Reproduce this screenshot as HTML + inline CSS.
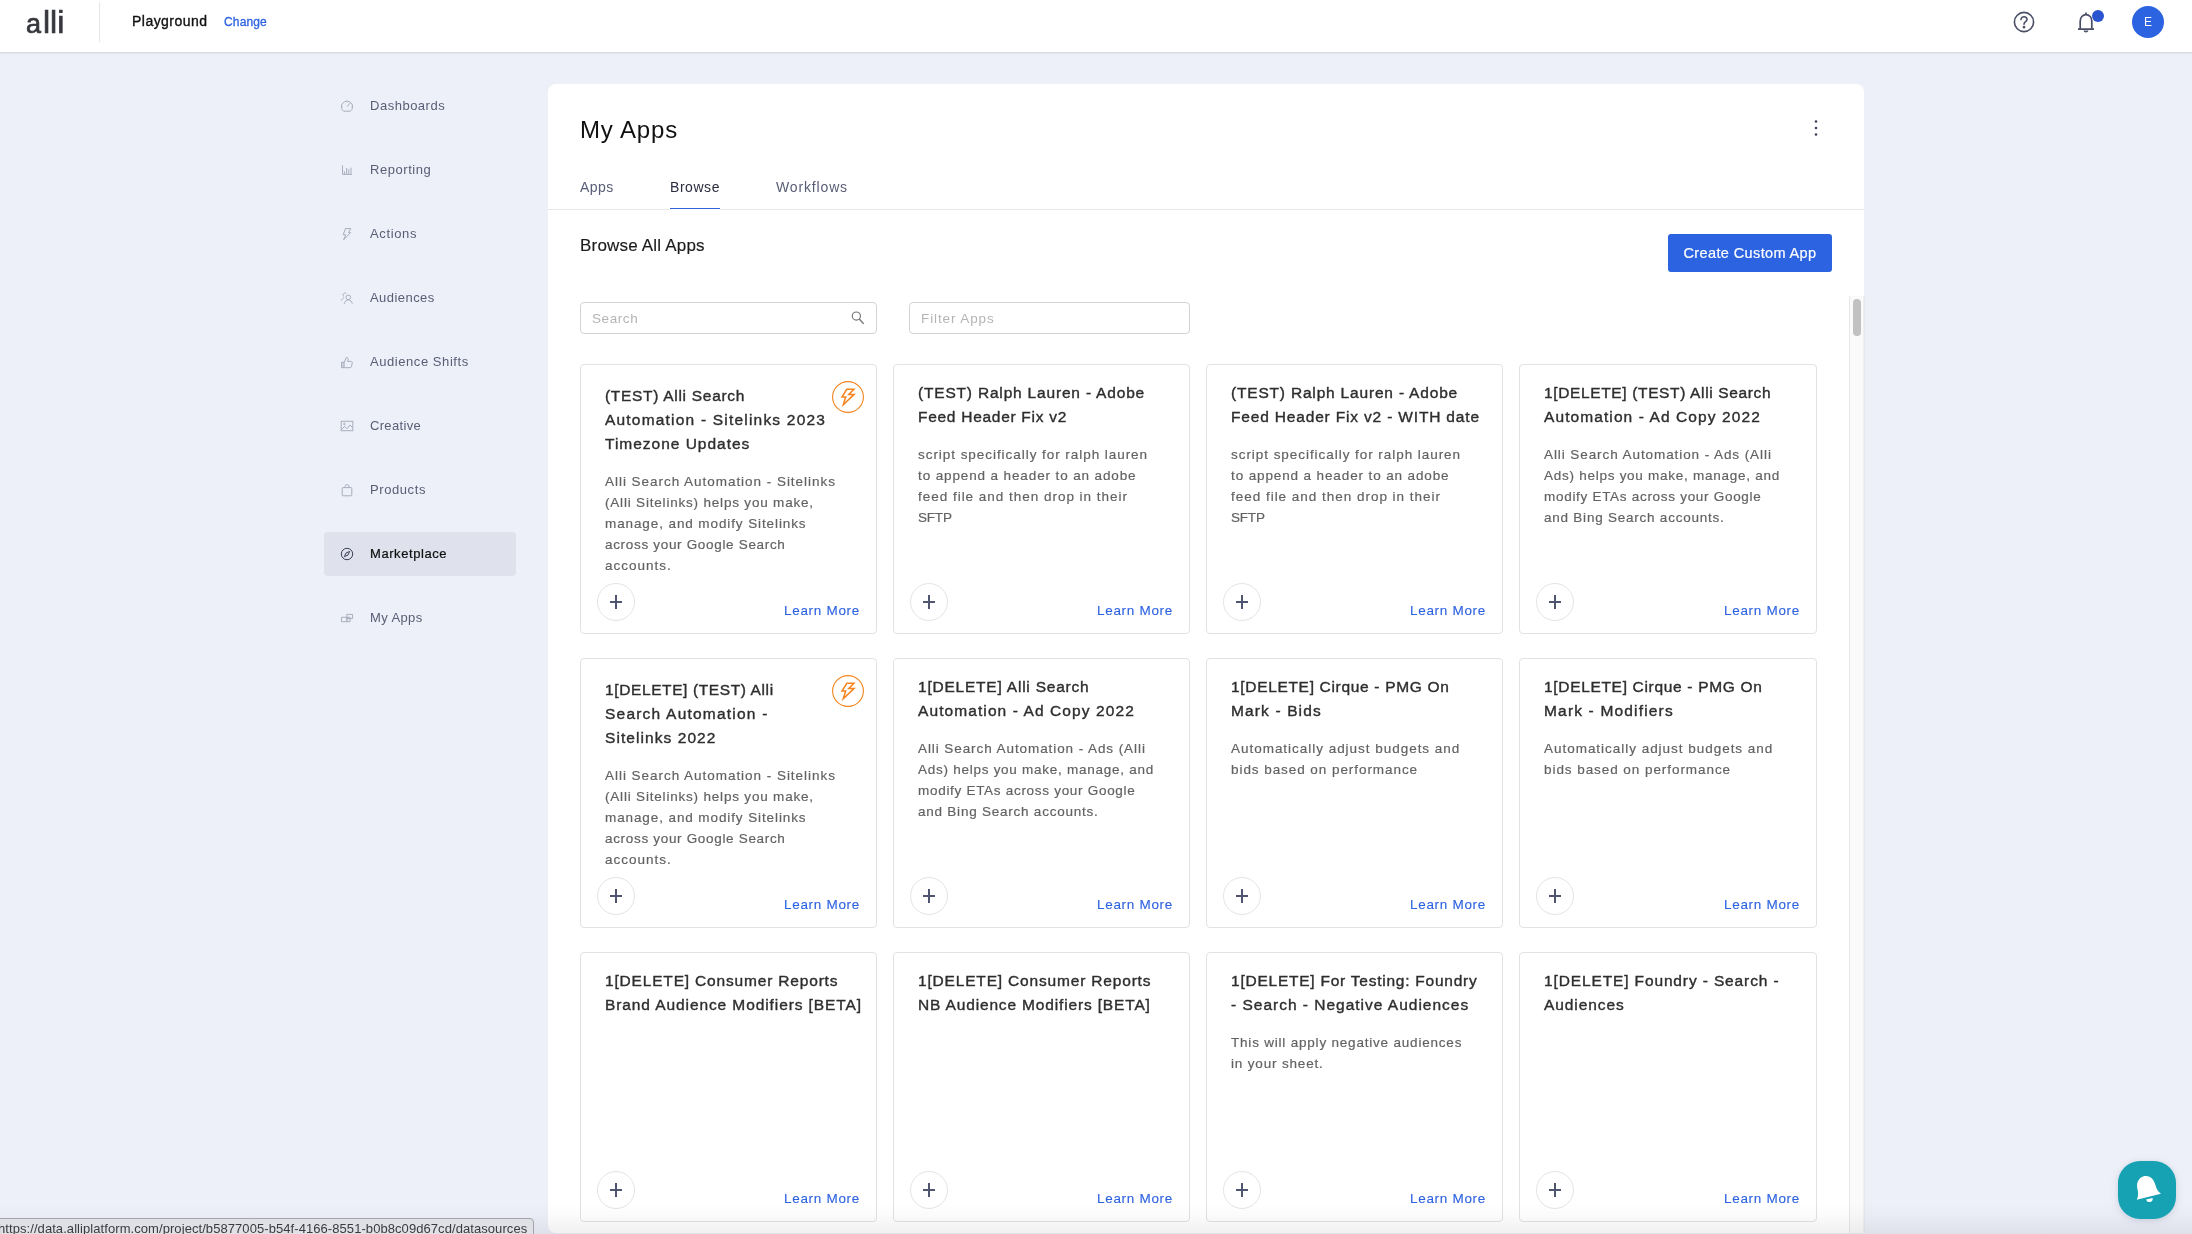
<!DOCTYPE html>
<html lang="en">
<head>
<meta charset="utf-8">
<title>My Apps - Browse</title>
<style>
*{box-sizing:border-box;margin:0;padding:0}
html,body{width:2192px;height:1234px;overflow:hidden}
body{background:#edf0f8;font-family:"Liberation Sans",Arial,sans-serif;color:#1b1b1b;position:relative}
.abs{position:absolute}
#hdr,#panel,.nav,#status,#chat{will-change:transform}
/* header */
#hdr{position:absolute;left:0;top:0;width:2192px;height:52px;background:#fff;box-shadow:0 1px 0 #d9dce4,0 2px 1px rgba(217,220,228,.35)}
#logo{position:absolute;left:26px;top:2px;font-size:32px;line-height:40px;color:#36373d;letter-spacing:0;-webkit-text-stroke:.7px #36373d}
#hdiv{position:absolute;left:99px;top:2px;width:1px;height:40px;background:#e6e6e7}
#proj{position:absolute;left:132px;top:11px;font-size:14px;line-height:20px;color:#111;letter-spacing:.47px;-webkit-text-stroke:.35px #111}
#chg{position:absolute;left:224px;top:12px;font-size:12px;line-height:20px;color:#2d62e0;letter-spacing:.15px;-webkit-text-stroke:.3px #2d62e0}
#avatar{position:absolute;left:2132px;top:6px;width:32px;height:32px;border-radius:50%;background:#2b63e1;color:#fff;font-size:12px;line-height:33px;text-align:center}
#ndot{position:absolute;left:2092px;top:10px;width:12px;height:12px;border-radius:50%;background:#2b55cf}
/* sidebar */
.nav{position:absolute;left:324px;width:192px;height:44px;border-radius:4px;font-size:13px;line-height:44px;color:#595d75;padding-left:46px;letter-spacing:.35px}
.nav.on{background:#dfe2ec;color:#111;-webkit-text-stroke:.22px #111}
.nav svg{position:absolute;left:16px;top:15px;width:14px;height:14px;fill:none;stroke:#a9adbd;stroke-width:1}
.nav.on svg{stroke:#3c4058}
/* panel */
#panel{position:absolute;left:548px;top:84px;width:1316px;height:1149px;background:#fff;border-radius:8px 8px 0 8px;overflow:hidden}
#title{position:absolute;left:32px;top:30px;font-size:24px;line-height:32px;color:#111;letter-spacing:.85px}
.tab{position:absolute;top:92.5px;font-size:14px;line-height:20px;color:#595d75;letter-spacing:.45px}
.tab.on{color:#2a2d3e}
#tabline{position:absolute;left:0;top:125px;width:1316px;height:1px;background:#e7e7e8}
#tabul{position:absolute;left:122px;top:124px;width:50px;height:2px;background:#fff;border-top:1px solid #2d62e0}
#sub{position:absolute;left:32px;top:150px;font-size:17px;line-height:24px;color:#1b1b1b;letter-spacing:.19px;-webkit-text-stroke:.15px #1b1b1b}
#cbtn{position:absolute;left:1120px;top:150px;width:164px;height:38px;border-radius:3px;background:#2b63e1;color:#fff;font-size:14.5px;line-height:39px;text-align:center;letter-spacing:.38px;-webkit-text-stroke:.2px #fff}
.inp{position:absolute;top:218px;height:32px;border:1px solid #d3d3d4;border-radius:4px;background:#fff;font-size:13.5px;line-height:31px;color:#b4b4b6;padding-left:11px;letter-spacing:.5px}
#track{position:absolute;left:1301px;top:212px;width:15px;height:940px;background:#fafafa;border-left:1px solid #e8e8e8;border-right:1px solid #f0f0f0}
#thumb{position:absolute;left:1305px;top:215px;width:8px;height:37px;border-radius:4px;background:#c1c1c1}
/* cards */
.card{position:absolute;width:297px;height:270px;border:1px solid #e2e2e4;border-radius:4px;background:#fff}
.t{position:absolute;left:24px;white-space:nowrap;font-size:15.5px;line-height:24px;color:#2e2e2e;-webkit-text-stroke:.38px #2e2e2e}
.d{position:absolute;left:24px;white-space:nowrap;font-size:13.5px;line-height:21px;color:#626262;-webkit-text-stroke:.18px #626262}
.plus{position:absolute;left:16px;top:218px;width:38px;height:38px;border:1px solid #e4e4e9;border-radius:50%;background:#fff}
.plus:before{content:"";position:absolute;left:11.7px;top:17px;width:12.6px;height:2px;background:#50556f}
.plus:after{content:"";position:absolute;left:17px;top:11.2px;width:2px;height:13.6px;background:#50556f}
.lm{position:absolute;right:16px;top:235px;white-space:nowrap;font-size:13.5px;line-height:21px;color:#2d62e0;-webkit-text-stroke:.1px #2d62e0}
.bolt{position:absolute;left:251px;top:16px;width:32px;height:32px}
#status{position:absolute;left:-1px;top:1218px;width:535px;height:20px;background:#dfe1e6;border:1px solid #a3a5a9;border-radius:0 4px 0 0;font-size:13px;line-height:15px;padding-top:1.6px;color:#3b3b3d;white-space:nowrap;overflow:hidden;text-indent:-2px;letter-spacing:.07px}
#chat{position:absolute;left:2118px;top:1161px;width:58px;height:58px;border-radius:22px;background:#17a2b3;box-shadow:0 1px 5px rgba(60,70,110,.13),0 2px 12px rgba(60,70,110,.07)}
#fade{position:absolute;left:0;top:1204px;width:2192px;height:30px;background:linear-gradient(to bottom,rgba(30,30,50,0),rgba(30,30,50,.02) 40%,rgba(30,30,50,.065));pointer-events:none}
</style>
</head>
<body>
<div id="hdr">
  <div id="logo"><span style="font-size:27px;letter-spacing:1.9px">a</span>lli</div>
  <div id="hdiv"></div>
  <div id="proj">Playground</div>
  <div id="chg">Change</div>
  <svg class="abs" style="left:2012px;top:10px" width="24" height="24" viewBox="0 0 24 24" fill="none" stroke="#4a4f66" stroke-width="1.6"><circle cx="12" cy="12" r="9.6"/><path d="M9 9.6c0-1.7 1.3-2.9 3-2.9s3 1.1 3 2.7c0 2.2-3 2.4-3 4.8" stroke-linecap="round"/><circle cx="12" cy="17.2" r=".6" fill="#4a4f66"/></svg>
  <svg class="abs" style="left:2074px;top:10px" width="24" height="24" viewBox="0 0 24 24" fill="none" stroke="#4a4f66" stroke-width="1.7"><path d="M6.2 19V11c0-3.6 2.5-6.3 5.8-6.3s5.8 2.7 5.8 6.3v8M4 19.2h16" stroke-linejoin="round"/><path d="M10.3 20.5a1.8 1.8 0 0 0 3.4 0M12 2.6v2"/></svg>
  <div id="ndot"></div>
  <div id="avatar">E</div>
</div>

<div class="nav" style="top:84px;letter-spacing:0.510px"><svg viewBox="0 0 14 14"><path d="M3.67 12.2A5.6 5.6 0 1 1 10.33 12.2z"/><path d="M7.1 7.7L9.9 4.1"/><path d="M7 2.6v.9M2.2 7.7h.9M11 7.7h.9" opacity=".6"/></svg><span>Dashboards</span></div>
<div class="nav" style="top:148px;letter-spacing:0.553px"><svg viewBox="0 0 14 14"><path d="M2.5 2.3v9.1H12.1M4.4 11V8.3M6.6 11V5M8.8 11V6.1M11 11V4.6"/></svg><span>Reporting</span></div>
<div class="nav" style="top:212px;letter-spacing:0.627px"><svg viewBox="0 0 14 14"><path d="M5.4 1.6h5.4L8.4 5.6h2.2L3.6 12.9l2.1-5.2H3.2z" stroke-linejoin="round"/></svg><span>Actions</span></div>
<div class="nav" style="top:276px;letter-spacing:0.448px"><svg viewBox="0 0 14 14"><circle cx="8.3" cy="6.4" r="2.3"/><path d="M4.3 12.8c.5-2.5 2-3.9 4-3.9s3.5 1.4 4 3.9M1.4 9.6c.5-1.4 1.3-2.3 2.5-2.7M3.6 5.6a2.2 2.2 0 0 1 2.6-3.4"/></svg><span>Audiences</span></div>
<div class="nav" style="top:340px;letter-spacing:0.561px"><svg viewBox="0 0 14 14"><path d="M1.5 7.2h2.6v5.5H1.5z" fill="#a9adbd" fill-opacity=".45"/><path d="M4.1 7.6l2.3-5.3c1.2 0 1.8.8 1.6 1.9l-.4 2.2h3.5c.9 0 1.4.7 1.2 1.5l-.9 3.7c-.2.7-.7 1.1-1.4 1.1H4.1" stroke-linejoin="round"/></svg><span>Audience Shifts</span></div>
<div class="nav" style="top:404px;letter-spacing:0.325px"><svg viewBox="0 0 14 14"><rect x="1.2" y="2.3" width="11.6" height="9.4"/><path d="M1.6 10.4l3-3 2.4 2.4 3-3.8 2.6 2.8"/><circle cx="4.4" cy="5" r=".8"/></svg><span>Creative</span></div>
<div class="nav" style="top:468px;letter-spacing:0.584px"><svg viewBox="0 0 14 14"><rect x="2.2" y="4.6" width="9.6" height="8.2" rx=".8"/><path d="M5 4.6V3.6a2 2 0 0 1 4 0v1"/></svg><span>Products</span></div>
<div class="nav on" style="top:532px;letter-spacing:0.569px"><svg viewBox="0 0 14 14"><circle cx="7" cy="7" r="5.7"/><path d="M9.6 4.4L6 6 4.4 9.6 8 8z" stroke-linejoin="round"/></svg><span>Marketplace</span></div>
<div class="nav" style="top:596px;letter-spacing:0.390px"><svg viewBox="0 0 14 14"><path d="M1.5 6.3h5.4v4.4H1.5zM6.9 6.3h3.1v4.4H6.9zM6.9 3.4h5.7v4.1H6.9z"/></svg><span>My Apps</span></div>

<div id="panel">
  <div id="title">My Apps</div>
  <div class="tab" style="left:32px">Apps</div>
  <div class="tab on" style="left:122px;letter-spacing:.55px">Browse</div>
  <div class="tab" style="left:228px;letter-spacing:.85px">Workflows</div>
  <div id="tabline"></div><div id="tabul"></div>
  <svg class="abs" style="left:1260px;top:34px" width="16" height="20" viewBox="0 0 16 20" fill="#3c4058"><circle cx="8" cy="3.5" r="1.3"/><circle cx="8" cy="10" r="1.3"/><circle cx="8" cy="16.5" r="1.3"/></svg>
  <div id="sub">Browse All Apps</div>
  <div id="cbtn">Create Custom App</div>
  <div class="inp" style="left:32px;width:297px;letter-spacing:.58px">Search
    <svg class="abs" style="left:270px;top:7px" width="16" height="16" viewBox="0 0 16 16" fill="none" stroke="#747474" stroke-width="1.15"><circle cx="5.35" cy="6.05" r="4.1"/><path d="M8.3 9l4.4 4.9" stroke-width="1.4"/></svg>
  </div>
  <div class="inp" style="left:361px;width:281px;letter-spacing:.9px">Filter Apps</div>
  <div id="track"></div><div id="thumb"></div>
  <div class="card" style="left:32px;top:280px"><div class="t" style="top:19px;letter-spacing:0.701px">(TEST) Alli Search</div><div class="t" style="top:43px;letter-spacing:1.200px">Automation - Sitelinks 2023</div><div class="t" style="top:67px;letter-spacing:0.985px">Timezone Updates</div><div class="d" style="top:106px;letter-spacing:0.964px">Alli Search Automation - Sitelinks</div><div class="d" style="top:127px;letter-spacing:0.807px">(Alli Sitelinks) helps you make,</div><div class="d" style="top:148px;letter-spacing:0.898px">manage, and modify Sitelinks</div><div class="d" style="top:169px;letter-spacing:0.679px">across your Google Search</div><div class="d" style="top:190px;letter-spacing:1.000px">accounts.</div><div class="bolt"><svg width="32" height="32" viewBox="0 0 32 32" fill="none" stroke="#f5841f"><circle cx="16" cy="16" r="15.4" stroke-width="1.1"/><path d="M14.8 8.3h7.1l-5.1 5.1h5.3L11.3 23.7l2.4-7.7H10z" stroke-width="1.5" stroke-linejoin="miter"/></svg></div><div class="plus"></div><div class="lm" style="letter-spacing:0.695px">Learn More</div></div>
<div class="card" style="left:345px;top:280px"><div class="t" style="top:16px;letter-spacing:0.813px">(TEST) Ralph Lauren - Adobe</div><div class="t" style="top:40px;letter-spacing:0.716px">Feed Header Fix v2</div><div class="d" style="top:79px;letter-spacing:0.950px">script specifically for ralph lauren</div><div class="d" style="top:100px;letter-spacing:0.877px">to append a header to an adobe</div><div class="d" style="top:121px;letter-spacing:0.980px">feed file and then drop in their</div><div class="d" style="top:142px;letter-spacing:-0.205px">SFTP</div><div class="plus"></div><div class="lm" style="letter-spacing:0.695px">Learn More</div></div>
<div class="card" style="left:658px;top:280px"><div class="t" style="top:16px;letter-spacing:0.813px">(TEST) Ralph Lauren - Adobe</div><div class="t" style="top:40px;letter-spacing:0.829px">Feed Header Fix v2 - WITH date</div><div class="d" style="top:79px;letter-spacing:0.950px">script specifically for ralph lauren</div><div class="d" style="top:100px;letter-spacing:0.877px">to append a header to an adobe</div><div class="d" style="top:121px;letter-spacing:0.980px">feed file and then drop in their</div><div class="d" style="top:142px;letter-spacing:-0.205px">SFTP</div><div class="plus"></div><div class="lm" style="letter-spacing:0.695px">Learn More</div></div>
<div class="card" style="left:971px;top:280px;width:298px"><div class="t" style="top:16px;letter-spacing:0.640px">1[DELETE] (TEST) Alli Search</div><div class="t" style="top:40px;letter-spacing:1.093px">Automation - Ad Copy 2022</div><div class="d" style="top:79px;letter-spacing:0.918px">Alli Search Automation - Ads (Alli</div><div class="d" style="top:100px;letter-spacing:0.736px">Ads) helps you make, manage, and</div><div class="d" style="top:121px;letter-spacing:0.706px">modify ETAs across your Google</div><div class="d" style="top:142px;letter-spacing:0.768px">and Bing Search accounts.</div><div class="plus"></div><div class="lm" style="letter-spacing:0.695px">Learn More</div></div>
<div class="card" style="left:32px;top:574px"><div class="t" style="top:19px;letter-spacing:0.610px">1[DELETE] (TEST) Alli</div><div class="t" style="top:43px;letter-spacing:1.219px">Search Automation -</div><div class="t" style="top:67px;letter-spacing:1.068px">Sitelinks 2022</div><div class="d" style="top:106px;letter-spacing:0.964px">Alli Search Automation - Sitelinks</div><div class="d" style="top:127px;letter-spacing:0.807px">(Alli Sitelinks) helps you make,</div><div class="d" style="top:148px;letter-spacing:0.898px">manage, and modify Sitelinks</div><div class="d" style="top:169px;letter-spacing:0.679px">across your Google Search</div><div class="d" style="top:190px;letter-spacing:1.000px">accounts.</div><div class="bolt"><svg width="32" height="32" viewBox="0 0 32 32" fill="none" stroke="#f5841f"><circle cx="16" cy="16" r="15.4" stroke-width="1.1"/><path d="M14.8 8.3h7.1l-5.1 5.1h5.3L11.3 23.7l2.4-7.7H10z" stroke-width="1.5" stroke-linejoin="miter"/></svg></div><div class="plus"></div><div class="lm" style="letter-spacing:0.695px">Learn More</div></div>
<div class="card" style="left:345px;top:574px"><div class="t" style="top:16px;letter-spacing:0.781px">1[DELETE] Alli Search</div><div class="t" style="top:40px;letter-spacing:1.093px">Automation - Ad Copy 2022</div><div class="d" style="top:79px;letter-spacing:0.918px">Alli Search Automation - Ads (Alli</div><div class="d" style="top:100px;letter-spacing:0.736px">Ads) helps you make, manage, and</div><div class="d" style="top:121px;letter-spacing:0.706px">modify ETAs across your Google</div><div class="d" style="top:142px;letter-spacing:0.768px">and Bing Search accounts.</div><div class="plus"></div><div class="lm" style="letter-spacing:0.695px">Learn More</div></div>
<div class="card" style="left:658px;top:574px"><div class="t" style="top:16px;letter-spacing:0.677px">1[DELETE] Cirque - PMG On</div><div class="t" style="top:40px;letter-spacing:1.133px">Mark - Bids</div><div class="d" style="top:79px;letter-spacing:0.973px">Automatically adjust budgets and</div><div class="d" style="top:100px;letter-spacing:0.937px">bids based on performance</div><div class="plus"></div><div class="lm" style="letter-spacing:0.695px">Learn More</div></div>
<div class="card" style="left:971px;top:574px;width:298px"><div class="t" style="top:16px;letter-spacing:0.677px">1[DELETE] Cirque - PMG On</div><div class="t" style="top:40px;letter-spacing:1.173px">Mark - Modifiers</div><div class="d" style="top:79px;letter-spacing:0.973px">Automatically adjust budgets and</div><div class="d" style="top:100px;letter-spacing:0.937px">bids based on performance</div><div class="plus"></div><div class="lm" style="letter-spacing:0.695px">Learn More</div></div>
<div class="card" style="left:32px;top:868px"><div class="t" style="top:16px;letter-spacing:0.823px">1[DELETE] Consumer Reports</div><div class="t" style="top:40px;letter-spacing:0.907px">Brand Audience Modifiers [BETA]</div><div class="plus"></div><div class="lm" style="letter-spacing:0.695px">Learn More</div></div>
<div class="card" style="left:345px;top:868px"><div class="t" style="top:16px;letter-spacing:0.823px">1[DELETE] Consumer Reports</div><div class="t" style="top:40px;letter-spacing:0.846px">NB Audience Modifiers [BETA]</div><div class="plus"></div><div class="lm" style="letter-spacing:0.695px">Learn More</div></div>
<div class="card" style="left:658px;top:868px"><div class="t" style="top:16px;letter-spacing:0.762px">1[DELETE] For Testing: Foundry</div><div class="t" style="top:40px;letter-spacing:0.994px">- Search - Negative Audiences</div><div class="d" style="top:79px;letter-spacing:0.796px">This will apply negative audiences</div><div class="d" style="top:100px;letter-spacing:0.827px">in your sheet.</div><div class="plus"></div><div class="lm" style="letter-spacing:0.695px">Learn More</div></div>
<div class="card" style="left:971px;top:868px;width:298px"><div class="t" style="top:16px;letter-spacing:0.872px">1[DELETE] Foundry - Search -</div><div class="t" style="top:40px;letter-spacing:0.914px">Audiences</div><div class="plus"></div><div class="lm" style="letter-spacing:0.695px">Learn More</div></div>
</div>
<div class="abs" style="left:1864px;top:296px;width:1px;height:937px;background:#e7e8ee"></div>
<div id="fade"></div>
<div id="status">https://data.alliplatform.com/project/b5877005-b54f-4166-8551-b0b8c09d67cd/datasources</div>
<div id="chat"><svg width="58" height="58" viewBox="0 0 58 58"><g transform="translate(28.7 27.1) rotate(-14)" fill="#fff"><path d="M0-12.3C-5.6-12.1-9-7.6-9.2-1.5-9.3 3-10 6-12.5 9H12.5C10 6 9.3 3 9.2-1.5 9-7.6 5.6-12.1 0-12.3z"/><path d="M-3.3 10.9a3.3 3.3 0 0 0 6.6 0z"/></g></svg></div>
</body>
</html>
